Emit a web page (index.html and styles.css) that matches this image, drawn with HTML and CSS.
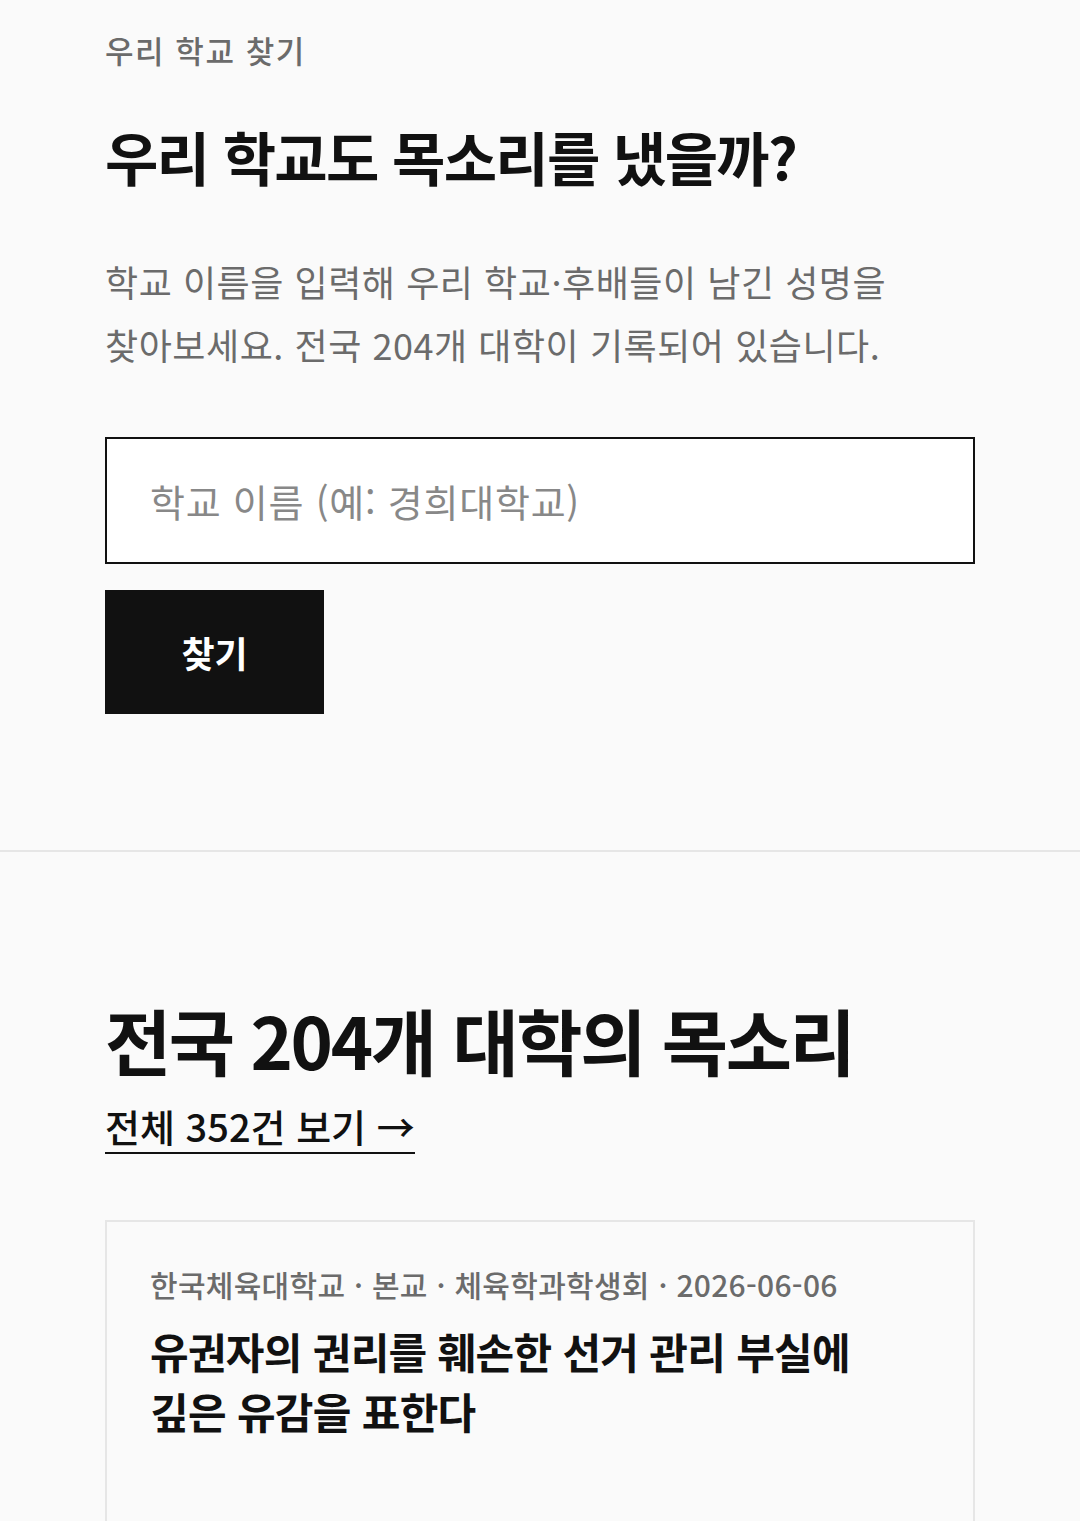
FILE: index.html
```html
<!DOCTYPE html>
<html lang="ko">
<head>
    <meta charset="UTF-8">
    <meta name="viewport" content="width=device-width, initial-scale=1.0">
    <title>우리 학교 찾기</title>
    <link rel="stylesheet" href="styles.css">
</head>
<body>
    <section class="search">
        <div class="eyebrow">우리 학교 찾기</div>
        <h1 class="search-title">우리 학교도 목소리를 냈을까?</h1>
        <p class="search-desc">학교 이름을 입력해 우리 학교·후배들이 남긴 성명을<br>찾아보세요. 전국 204개 대학이 기록되어 있습니다.</p>
        <form class="search-form" onsubmit="return false">
            <input class="search-input" type="text" placeholder="학교 이름 (예: 경희대학교)">
            <button class="search-btn" type="submit">찾기</button>
        </form>
    </section>

    <section class="voices">
        <h2 class="voices-title">전국 204개 대학의 목소리</h2>
        <a class="voices-link" href="#">전체 352건 보기 →</a>

        <article class="card">
            <div class="card-meta">한국체육대학교 · 본교 · 체육학과학생회 · 2026-06-06</div>
            <h3 class="card-title">유권자의 권리를 훼손한 선거 관리 부실에<br>깊은 유감을 표한다</h3>
        </article>
    </section>
</body>
</html>
```

FILE: styles.css
```css
body {
    margin: 0;
    padding: 0;
    background-color: #fafafa;
    color: #111;
    font-family: "Noto Sans CJK KR", "Noto Sans", sans-serif;
}

.search {
    padding: 28px 105px 136px;
    border-bottom: 2px solid #e6e6e6;
}

.eyebrow {
    font-size: 31px;
    font-weight: 500;
    color: #6b6b6b;
    letter-spacing: 0.05em;
    line-height: 44px;
}

.search-title {
    margin: 44px 0 0;
    font-size: 58px;
    font-weight: 700;
    letter-spacing: -0.03em;
    line-height: 80px;
}

.search-desc {
    margin: 54px 0 0;
    font-size: 36px;
    font-weight: 400;
    color: #6b6b6b;
    letter-spacing: 0.015em;
    line-height: 63px;
}

.search-form {
    margin-top: 61px;
    display: flex;
    flex-direction: column;
    align-items: flex-start;
    gap: 26px;
}

.search-input {
    box-sizing: border-box;
    width: 100%;
    height: 127px;
    padding: 0 43px;
    border: 2px solid #111;
    border-radius: 0;
    background: #fff;
    font-family: inherit;
    font-size: 38px;
    letter-spacing: 0.02em;
    color: #111;
    outline: none;
}

.search-input::placeholder {
    color: #888;
}

.search-btn {
    width: 219px;
    height: 124px;
    border: none;
    border-radius: 0;
    background: #111;
    color: #fff;
    font-family: inherit;
    font-size: 36px;
    font-weight: 700;
    letter-spacing: 0;
}

.voices {
    padding: 142px 105px 0;
}

.voices-title {
    margin: 0;
    font-size: 72px;
    font-weight: 700;
    letter-spacing: -0.033em;
    line-height: 90px;
}

.voices-link {
    display: inline-block;
    margin-top: 18px;
    color: #111;
    text-decoration: none;
    font-size: 38px;
    font-weight: 500;
    letter-spacing: 0;
    line-height: 48px;
    padding-bottom: 2px;
    border-bottom: 2px solid #111;
}

.card {
    margin-top: 66px;
    padding: 40px 43px 90px;
    border: 2px solid #e6e6e6;
    border-bottom: none;
}

.card-meta {
    font-size: 30px;
    font-weight: 500;
    color: #6b6b6b;
    letter-spacing: 0.01em;
    line-height: 44px;
}

.card-title {
    margin: 15px 0 0;
    font-size: 42px;
    font-weight: 700;
    letter-spacing: -0.017em;
    line-height: 60px;
}
```
